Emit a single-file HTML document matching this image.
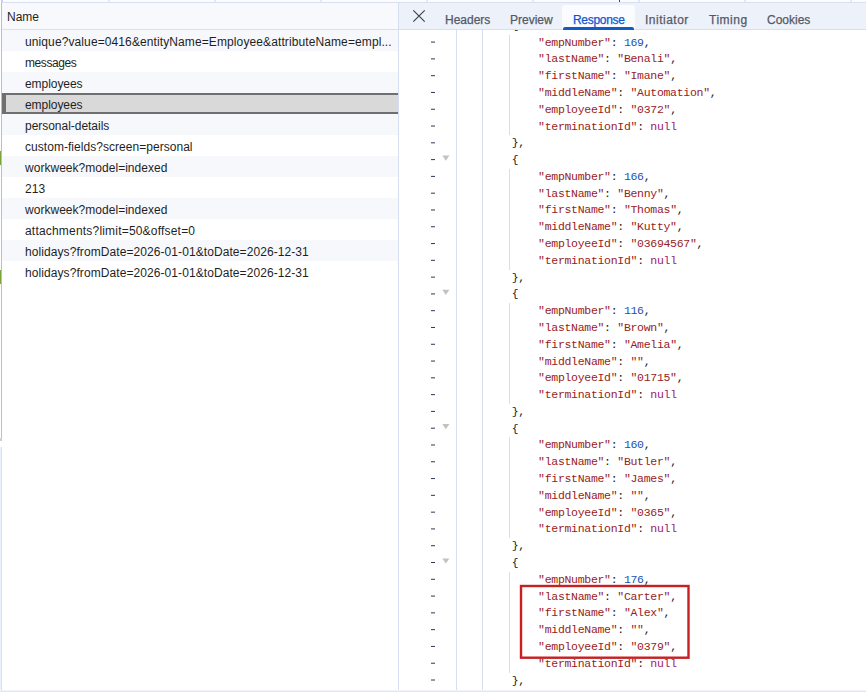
<!DOCTYPE html>
<html><head><meta charset="utf-8"><title>Network</title>
<style>
html,body{margin:0;padding:0}
body{width:866px;height:692px;position:relative;overflow:hidden;background:#fff;font-family:"Liberation Sans",sans-serif;font-size:12px;color:#1f1f1f}
div,span{box-sizing:border-box}
.abs{position:absolute}
#topstrip{left:0;top:0;width:866px;height:2px;background:#fcfcff}
#topline{left:2px;top:2px;width:864px;height:1px;background:#d8dff2}
.tdiv{top:0;width:1px;height:2px;background:#cfd8ef}
#lhead{left:2px;top:3px;width:396px;height:26px;background:#f8f9fc}
#lheadb{left:2px;top:29px;width:396px;height:1px;background:#d8dff2}
.row{left:2px;width:396px;height:21px}
.row.odd{background:#f6f8fc}
.row.sel{background:#d9d9d9;border-top:2px solid #6f6f6f;border-bottom:2px solid #6f6f6f;border-left:4px solid #6f6f6f}
.t{position:absolute;white-space:pre;line-height:21px;height:21px;top:0;color:#1f1f1f}
#vdiv{left:398px;top:3px;width:1px;height:688px;background:#d6def2}
#lborder{left:1px;top:3px;width:1px;height:436px;background:#bebebe}
#lborder2{left:0;top:447px;width:2px;height:245px;background:linear-gradient(90deg,#eaf1fe 0,#eaf1fe 50%,#d9e1ee 50%,#d9e1ee 100%)}
#bottomline{left:0;top:690px;width:866px;height:2px;background:linear-gradient(#f1f4fa 0,#f1f4fa 50%,#e1e6f1 50%,#e1e6f1 100%)}
#tabbar{left:399px;top:3px;width:467px;height:26px;background:#edf1fa}
#tabbarb{left:399px;top:29px;width:467px;height:1px;background:#d6def2}
.tab{position:absolute;top:4px;height:26px;line-height:32px;font-size:12px;color:#474747;white-space:pre;-webkit-text-stroke:0.25px currentColor}
#acttab{left:562px;top:5px;width:73px;height:24px;background:#fafcff;border-radius:3px 3px 0 0}
#actline{left:563px;top:27px;width:71px;height:3px;background:#1558c7;border-radius:2px 2px 0 0}
#code{left:399px;top:30px;width:467px;height:660px;overflow:hidden}
.ln{position:absolute;left:0;height:16.8px;line-height:16.8px;font-family:"Liberation Mono",monospace;font-size:11.5px;letter-spacing:-0.3px;white-space:pre;color:#202124}
.k{color:#981c24}.s{color:#981c24}.n{color:#1a50b0}.a{color:#9c1a72}
.dash{position:absolute;left:431px;width:4px;height:1px;background:#2c3a55}
.guide{position:absolute;width:1px;background:#d8deef}
.fold{position:absolute;left:442.5px;width:0;height:0;border-left:3.3px solid transparent;border-right:3.3px solid transparent;border-top:5px solid #c6c6c6}
.green{left:0;width:1px;background:#7aa33a}
</style></head><body>

<div class="abs" id="topstrip"></div>
<svg class="abs" style="left:0;top:0" width="866" height="3"><rect x="108.6" y="0" width="1" height="2.3" fill="#cdd5ec"/><rect x="214.6" y="0" width="1" height="2.3" fill="#cdd5ec"/><rect x="320.6" y="0" width="1" height="2.3" fill="#cdd5ec"/><rect x="426.6" y="0" width="1" height="2.3" fill="#cdd5ec"/><rect x="532.6" y="0" width="1" height="2.3" fill="#cdd5ec"/><rect x="638.6" y="0" width="1" height="2.3" fill="#cdd5ec"/><rect x="744.6" y="0" width="1" height="2.3" fill="#cdd5ec"/><rect x="850.6" y="0" width="1" height="2.3" fill="#cdd5ec"/></svg>
<div class="abs" style="left:1px;top:0;width:2px;height:3px;background:#c5cdf0"></div>
<div class="abs" style="left:619px;top:0;width:1px;height:2px;background:#444"></div>
<div class="abs" id="topline"></div>
<div class="abs" id="lhead"><span class="t" style="left:5px;top:4px">Name</span></div>
<div class="abs" id="lheadb"></div>
<div class="row abs odd" style="top:30px"><span class="t" style="left:23px;top:2px;letter-spacing:0.105px">unique?value=0416&amp;entityName=Employee&amp;attributeName=empl...</span></div>
<div class="row abs" style="top:51px"><span class="t" style="left:23px;top:2px;letter-spacing:-0.41px">messages</span></div>
<div class="row abs odd" style="top:72px"><span class="t" style="left:23px;top:2px;letter-spacing:-0.06px">employees</span></div>
<div class="row abs sel" style="top:93px"><span class="t" style="left:19px;top:0px;letter-spacing:-0.06px">employees</span></div>
<div class="row abs odd" style="top:114px"><span class="t" style="left:23px;top:2px;letter-spacing:-0.03px">personal-details</span></div>
<div class="row abs" style="top:135px"><span class="t" style="left:23px;top:2px;letter-spacing:0.04px">custom-fields?screen=personal</span></div>
<div class="row abs odd" style="top:156px"><span class="t" style="left:23px;top:2px;letter-spacing:0.03px">workweek?model=indexed</span></div>
<div class="row abs" style="top:177px"><span class="t" style="left:23px;top:2px;letter-spacing:0.1px">213</span></div>
<div class="row abs odd" style="top:198px"><span class="t" style="left:23px;top:2px;letter-spacing:0.03px">workweek?model=indexed</span></div>
<div class="row abs" style="top:219px"><span class="t" style="left:23px;top:2px;letter-spacing:0.195px">attachments?limit=50&amp;offset=0</span></div>
<div class="row abs odd" style="top:240px"><span class="t" style="left:23px;top:2px;letter-spacing:0.08px">holidays?fromDate=2026-01-01&amp;toDate=2026-12-31</span></div>
<div class="row abs" style="top:261px"><span class="t" style="left:23px;top:2px;letter-spacing:0.08px">holidays?fromDate=2026-01-01&amp;toDate=2026-12-31</span></div>
<div class="abs" id="lborder"></div>
<div class="abs" id="lborder2"></div>
<div class="abs" style="left:0;top:438px;width:2px;height:3px;background:#cfcfcf"></div>
<div class="abs green" style="top:151px;height:14px"></div>
<div class="abs green" style="top:270px;height:14px"></div>
<div class="abs" id="vdiv"></div>
<div class="abs" id="codewrap" style="left:0;top:0;width:866px;height:692px">
<div class="guide" style="left:456px;top:30px;height:660px"></div>
<div class="guide" style="left:482px;top:30px;height:660px"></div>
<div class="ln" style="left:511.70px;top:17.81px">{</div>
<div class="ln" style="left:538.10px;top:34.60px"><span class="k">"empNumber"</span>: <span class="n">169</span>,</div>
<div class="guide" style="left:509px;top:34.60px;height:16.8px"></div>
<div class="ln" style="left:538.10px;top:51.39px"><span class="k">"lastName"</span>: <span class="s">"Benali"</span>,</div>
<div class="guide" style="left:509px;top:51.39px;height:16.8px"></div>
<div class="ln" style="left:538.10px;top:68.17px"><span class="k">"firstName"</span>: <span class="s">"Imane"</span>,</div>
<div class="guide" style="left:509px;top:68.17px;height:16.8px"></div>
<div class="ln" style="left:538.10px;top:84.96px"><span class="k">"middleName"</span>: <span class="s">"Automation"</span>,</div>
<div class="guide" style="left:509px;top:84.96px;height:16.8px"></div>
<div class="ln" style="left:538.10px;top:101.75px"><span class="k">"employeeId"</span>: <span class="s">"0372"</span>,</div>
<div class="guide" style="left:509px;top:101.75px;height:16.8px"></div>
<div class="ln" style="left:538.10px;top:118.53px"><span class="k">"terminationId"</span>: <span class="a">null</span></div>
<div class="guide" style="left:509px;top:118.53px;height:16.8px"></div>
<div class="ln" style="left:511.70px;top:135.32px">},</div>
<div class="ln" style="left:511.70px;top:152.11px">{</div>
<div class="ln" style="left:538.10px;top:168.90px"><span class="k">"empNumber"</span>: <span class="n">166</span>,</div>
<div class="guide" style="left:509px;top:168.90px;height:16.8px"></div>
<div class="ln" style="left:538.10px;top:185.68px"><span class="k">"lastName"</span>: <span class="s">"Benny"</span>,</div>
<div class="guide" style="left:509px;top:185.68px;height:16.8px"></div>
<div class="ln" style="left:538.10px;top:202.47px"><span class="k">"firstName"</span>: <span class="s">"Thomas"</span>,</div>
<div class="guide" style="left:509px;top:202.47px;height:16.8px"></div>
<div class="ln" style="left:538.10px;top:219.26px"><span class="k">"middleName"</span>: <span class="s">"Kutty"</span>,</div>
<div class="guide" style="left:509px;top:219.26px;height:16.8px"></div>
<div class="ln" style="left:538.10px;top:236.04px"><span class="k">"employeeId"</span>: <span class="s">"03694567"</span>,</div>
<div class="guide" style="left:509px;top:236.04px;height:16.8px"></div>
<div class="ln" style="left:538.10px;top:252.83px"><span class="k">"terminationId"</span>: <span class="a">null</span></div>
<div class="guide" style="left:509px;top:252.83px;height:16.8px"></div>
<div class="ln" style="left:511.70px;top:269.62px">},</div>
<div class="ln" style="left:511.70px;top:286.40px">{</div>
<div class="ln" style="left:538.10px;top:303.19px"><span class="k">"empNumber"</span>: <span class="n">116</span>,</div>
<div class="guide" style="left:509px;top:303.19px;height:16.8px"></div>
<div class="ln" style="left:538.10px;top:319.98px"><span class="k">"lastName"</span>: <span class="s">"Brown"</span>,</div>
<div class="guide" style="left:509px;top:319.98px;height:16.8px"></div>
<div class="ln" style="left:538.10px;top:336.77px"><span class="k">"firstName"</span>: <span class="s">"Amelia"</span>,</div>
<div class="guide" style="left:509px;top:336.77px;height:16.8px"></div>
<div class="ln" style="left:538.10px;top:353.55px"><span class="k">"middleName"</span>: <span class="s">""</span>,</div>
<div class="guide" style="left:509px;top:353.55px;height:16.8px"></div>
<div class="ln" style="left:538.10px;top:370.34px"><span class="k">"employeeId"</span>: <span class="s">"01715"</span>,</div>
<div class="guide" style="left:509px;top:370.34px;height:16.8px"></div>
<div class="ln" style="left:538.10px;top:387.13px"><span class="k">"terminationId"</span>: <span class="a">null</span></div>
<div class="guide" style="left:509px;top:387.13px;height:16.8px"></div>
<div class="ln" style="left:511.70px;top:403.91px">},</div>
<div class="ln" style="left:511.70px;top:420.70px">{</div>
<div class="ln" style="left:538.10px;top:437.49px"><span class="k">"empNumber"</span>: <span class="n">160</span>,</div>
<div class="guide" style="left:509px;top:437.49px;height:16.8px"></div>
<div class="ln" style="left:538.10px;top:454.27px"><span class="k">"lastName"</span>: <span class="s">"Butler"</span>,</div>
<div class="guide" style="left:509px;top:454.27px;height:16.8px"></div>
<div class="ln" style="left:538.10px;top:471.06px"><span class="k">"firstName"</span>: <span class="s">"James"</span>,</div>
<div class="guide" style="left:509px;top:471.06px;height:16.8px"></div>
<div class="ln" style="left:538.10px;top:487.85px"><span class="k">"middleName"</span>: <span class="s">""</span>,</div>
<div class="guide" style="left:509px;top:487.85px;height:16.8px"></div>
<div class="ln" style="left:538.10px;top:504.64px"><span class="k">"employeeId"</span>: <span class="s">"0365"</span>,</div>
<div class="guide" style="left:509px;top:504.64px;height:16.8px"></div>
<div class="ln" style="left:538.10px;top:521.42px"><span class="k">"terminationId"</span>: <span class="a">null</span></div>
<div class="guide" style="left:509px;top:521.42px;height:16.8px"></div>
<div class="ln" style="left:511.70px;top:538.21px">},</div>
<div class="ln" style="left:511.70px;top:555.00px">{</div>
<div class="ln" style="left:538.10px;top:571.78px"><span class="k">"empNumber"</span>: <span class="n">176</span>,</div>
<div class="guide" style="left:509px;top:571.78px;height:16.8px"></div>
<div class="ln" style="left:538.10px;top:588.57px"><span class="k">"lastName"</span>: <span class="s">"Carter"</span>,</div>
<div class="guide" style="left:509px;top:588.57px;height:16.8px"></div>
<div class="ln" style="left:538.10px;top:605.36px"><span class="k">"firstName"</span>: <span class="s">"Alex"</span>,</div>
<div class="guide" style="left:509px;top:605.36px;height:16.8px"></div>
<div class="ln" style="left:538.10px;top:622.14px"><span class="k">"middleName"</span>: <span class="s">""</span>,</div>
<div class="guide" style="left:509px;top:622.14px;height:16.8px"></div>
<div class="ln" style="left:538.10px;top:638.93px"><span class="k">"employeeId"</span>: <span class="s">"0379"</span>,</div>
<div class="guide" style="left:509px;top:638.93px;height:16.8px"></div>
<div class="ln" style="left:538.10px;top:655.72px"><span class="k">"terminationId"</span>: <span class="a">null</span></div>
<div class="guide" style="left:509px;top:655.72px;height:16.8px"></div>
<div class="ln" style="left:511.70px;top:672.51px">},</div>
</div>
<svg class="abs" style="left:0;top:0" width="866" height="692"><rect x="431" y="41.60" width="4" height="1" fill="#2c3a55"/><rect x="431" y="58.39" width="4" height="1" fill="#2c3a55"/><rect x="431" y="75.17" width="4" height="1" fill="#2c3a55"/><rect x="431" y="91.96" width="4" height="1" fill="#2c3a55"/><rect x="431" y="108.75" width="4" height="1" fill="#2c3a55"/><rect x="431" y="125.53" width="4" height="1" fill="#2c3a55"/><rect x="431" y="142.32" width="4" height="1" fill="#2c3a55"/><rect x="431" y="159.11" width="4" height="1" fill="#2c3a55"/><polygon points="442.3,155.51 449.4,155.51 445.85,160.71" fill="#c2c2c2"/><rect x="431" y="175.90" width="4" height="1" fill="#2c3a55"/><rect x="431" y="192.68" width="4" height="1" fill="#2c3a55"/><rect x="431" y="209.47" width="4" height="1" fill="#2c3a55"/><rect x="431" y="226.26" width="4" height="1" fill="#2c3a55"/><rect x="431" y="243.04" width="4" height="1" fill="#2c3a55"/><rect x="431" y="259.83" width="4" height="1" fill="#2c3a55"/><rect x="431" y="276.62" width="4" height="1" fill="#2c3a55"/><rect x="431" y="293.40" width="4" height="1" fill="#2c3a55"/><polygon points="442.3,289.80 449.4,289.80 445.85,295.00" fill="#c2c2c2"/><rect x="431" y="310.19" width="4" height="1" fill="#2c3a55"/><rect x="431" y="326.98" width="4" height="1" fill="#2c3a55"/><rect x="431" y="343.77" width="4" height="1" fill="#2c3a55"/><rect x="431" y="360.55" width="4" height="1" fill="#2c3a55"/><rect x="431" y="377.34" width="4" height="1" fill="#2c3a55"/><rect x="431" y="394.13" width="4" height="1" fill="#2c3a55"/><rect x="431" y="410.91" width="4" height="1" fill="#2c3a55"/><rect x="431" y="427.70" width="4" height="1" fill="#2c3a55"/><polygon points="442.3,424.10 449.4,424.10 445.85,429.30" fill="#c2c2c2"/><rect x="431" y="444.49" width="4" height="1" fill="#2c3a55"/><rect x="431" y="461.27" width="4" height="1" fill="#2c3a55"/><rect x="431" y="478.06" width="4" height="1" fill="#2c3a55"/><rect x="431" y="494.85" width="4" height="1" fill="#2c3a55"/><rect x="431" y="511.64" width="4" height="1" fill="#2c3a55"/><rect x="431" y="528.42" width="4" height="1" fill="#2c3a55"/><rect x="431" y="545.21" width="4" height="1" fill="#2c3a55"/><rect x="431" y="562.00" width="4" height="1" fill="#2c3a55"/><polygon points="442.3,558.40 449.4,558.40 445.85,563.60" fill="#c2c2c2"/><rect x="431" y="578.78" width="4" height="1" fill="#2c3a55"/><rect x="431" y="595.57" width="4" height="1" fill="#2c3a55"/><rect x="431" y="612.36" width="4" height="1" fill="#2c3a55"/><rect x="431" y="629.14" width="4" height="1" fill="#2c3a55"/><rect x="431" y="645.93" width="4" height="1" fill="#2c3a55"/><rect x="431" y="662.72" width="4" height="1" fill="#2c3a55"/><rect x="431" y="679.51" width="4" height="1" fill="#2c3a55"/><rect x="521" y="586" width="167.5" height="71.7" fill="none" stroke="#c81f22" stroke-width="2.4"/></svg>
<div class="abs" id="tabbar"></div>
<div class="abs" id="tabbarb"></div>
<div class="abs" id="acttab"></div>
<div class="abs" id="actline"></div>
<svg class="abs" style="left:411px;top:8px" width="16" height="16" viewBox="0 0 16 16"><path d="M2.3 2.3 L13.7 13.7 M13.7 2.3 L2.3 13.7" stroke="#3b4046" stroke-width="1.15" fill="none"/></svg>
<span class="tab" style="left:445px;letter-spacing:0px;color:#535a66">Headers</span>
<span class="tab" style="left:510px;letter-spacing:0px;color:#535a66">Preview</span>
<span class="tab" style="left:573px;letter-spacing:-0.3px;color:#0b57d0">Response</span>
<span class="tab" style="left:645px;letter-spacing:0.5px;color:#535a66">Initiator</span>
<span class="tab" style="left:709px;letter-spacing:0.5px;color:#535a66">Timing</span>
<span class="tab" style="left:767px;letter-spacing:0px;color:#535a66">Cookies</span>
<div class="abs" id="bottomline"></div>
</body></html>
